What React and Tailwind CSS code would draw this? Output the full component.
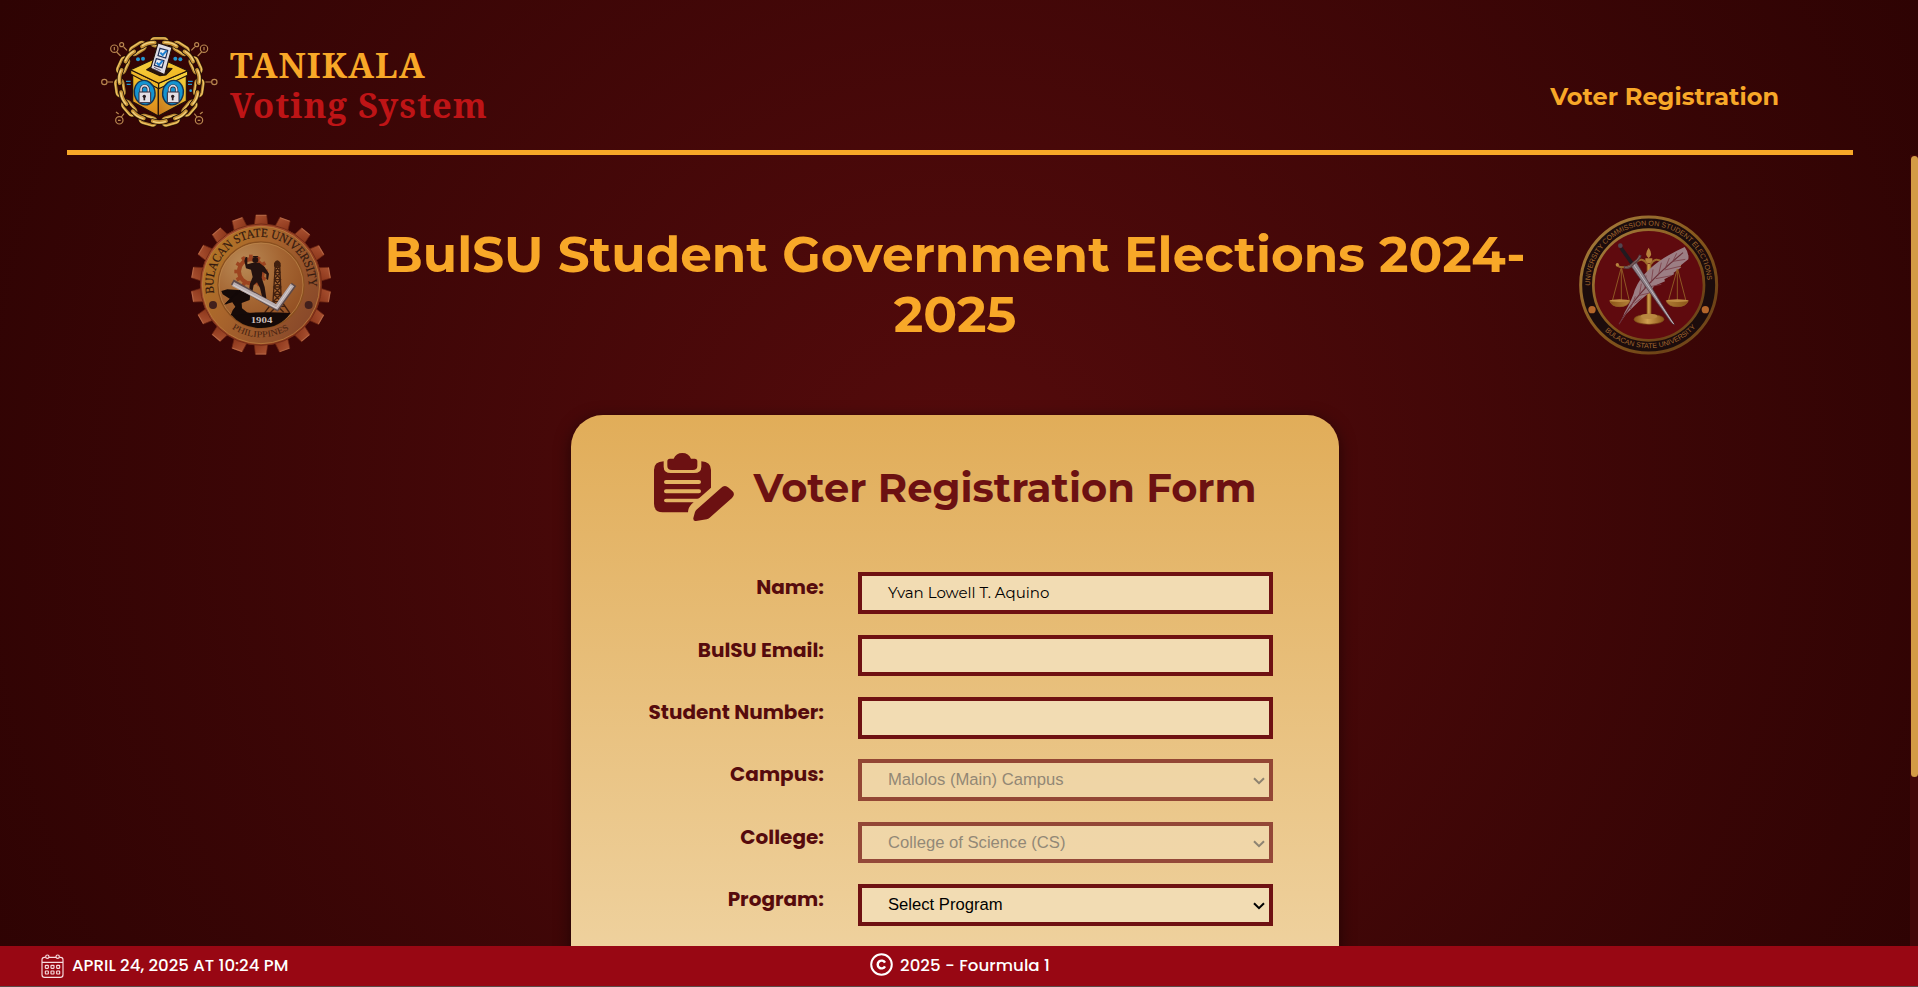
import React from "react";

const range = (n) => Array.from({ length: n }, (_, i) => i);

function TanikalaLogo() {
  const links = range(11);
  return (
    <svg className="h-[100px] w-[125px] shrink-0" viewBox="0 0 375 300" fill="none">
      <defs>
        <linearGradient id="boxTop" x1="0" y1="0" x2="1" y2="1">
          <stop offset="0" stopColor="#f6d443" />
          <stop offset="1" stopColor="#f0b01c" />
        </linearGradient>
        <linearGradient id="boxLeft" x1="0" y1="0" x2="0" y2="1">
          <stop offset="0" stopColor="#f5c52c" />
          <stop offset="1" stopColor="#d9861b" />
        </linearGradient>
        <linearGradient id="boxRight" x1="1" y1="0" x2="0" y2="1">
          <stop offset="0" stopColor="#f7d53c" />
          <stop offset="1" stopColor="#c8751a" />
        </linearGradient>
      </defs>

      <g stroke="#b8864f" strokeWidth="3.5">
        <circle cx="19" cy="156" r="8" />
        <path d="M28 156H45M322 156H340" />
        <circle cx="349" cy="156" r="8" />
        <circle cx="49" cy="56" r="11" />
        <path d="M49 51v10M56 66l12 12M77 51l10 10" />
        <circle cx="71" cy="44" r="6" />
        <circle cx="318" cy="56" r="11" />
        <path d="M318 51v10M311 66l-12 12M290 51l-10 10" />
        <circle cx="296" cy="44" r="6" />
        <circle cx="64" cy="271" r="11" />
        <path d="M60 271h8M70 261l8-10M54 246l8 6" />
        <circle cx="303" cy="271" r="11" />
        <path d="M299 271h8M297 261l-8-10M314 246l-8 6" />
      </g>

      {links.map((i) => (
        <g key={i} transform={`translate(184 156) rotate(${(i * 360) / 11})`}>
          <rect x="-25" y="-131" width="50" height="23" rx="11" stroke="#1c0d08" strokeWidth="12" />
          <rect x="-25" y="-131" width="50" height="23" rx="11" stroke="#b9822f" strokeWidth="8.5" />
          <rect x="-25" y="-132" width="50" height="23" rx="11" stroke="#ecc767" strokeWidth="3.5" />
        </g>
      ))}
      {links.map((i) => (
        <g key={i} transform={`translate(184 156) rotate(${((i + 0.5) * 360) / 11})`}>
          <path d="M-20 -117Q0 -124 20 -117" stroke="#1c0d08" strokeWidth="16" strokeLinecap="round" />
          <path d="M-20 -117Q0 -124 20 -117" stroke="#c99438" strokeWidth="11" strokeLinecap="round" />
          <path d="M-18 -119Q0 -125 18 -119" stroke="#f0d282" strokeWidth="4" strokeLinecap="round" />
        </g>
      ))}

      <g fill="#2496cf">
        <circle cx="120" cy="88" r="6" />
        <circle cx="135" cy="86" r="6" />
        <circle cx="232" cy="86" r="6" />
        <circle cx="247" cy="88" r="6" />
        <circle cx="278" cy="182" r="4" />
        <path d="M84 152h14v4H84zM86 161h12v4H86zM270 152h14v4h-14zM270 161h12v4h-12z" />
      </g>

      <g stroke="#23120a" strokeWidth="3.5" strokeLinejoin="round">
        <path d="M104 130L181 172V258L104 215Z" fill="url(#boxLeft)" />
        <path d="M181 172L265 134V213L181 258Z" fill="url(#boxRight)" />
        <path d="M98 119L182 160V176L98 132Z" fill="#eeb629" />
        <path d="M182 160L269 122V136L182 176Z" fill="#f6cf3a" />
        <path d="M98 119L180 82L269 122L182 160Z" fill="url(#boxTop)" />
        <path d="M146 119L160 110L222 116L203 135L186 137Z" fill="#2a1509" />
        <path d="M180 39L222 52L200 134L158 115Z" fill="#dfdce4" />
      </g>
      <path d="M168 112l20 9M166 117l18 8" stroke="#54485a" strokeWidth="2.5" />
      <g fill="#e6eaf0" stroke="#1d2d55" strokeWidth="3.5">
        <path d="M186 55L209 61L203 84L180 77Z" />
        <path d="M175 86L198 92L192 113L169 106Z" />
      </g>
      <g stroke="#1f7fd0" strokeWidth="6">
        <path d="M187 68l7 7l12-13M176 98l7 7l11-13" />
      </g>

      {[140, 225].map((x) => (
        <g key={x}>
          <ellipse cx={x} cy="188" rx="31" ry="37" fill="#1593cf" stroke="#143250" strokeWidth="4" transform={`rotate(${x < 180 ? -12 : 12} ${x} 188)`} />
          <path d={`M${x - 11} 188v-9a11 12 0 0 1 22 0v9`} stroke="#33283a" strokeWidth="9" />
          <path d={`M${x - 11} 188v-9a11 12 0 0 1 22 0v9`} stroke="#dcd8df" strokeWidth="5" />
          <rect x={x - 17} y="186" width="35" height="32" rx="2" fill="#e3dfe4" stroke="#33283a" strokeWidth="3" />
          <path d={`M${x - 1} 198v13`} stroke="#2a1d20" strokeWidth="5" />
          <circle cx={x - 1} cy="199" r="5" fill="#2a1d20" />
        </g>
      ))}
    </svg>
  );
}

function UniversitySeal() {
  return (
    <svg className="h-[160px] w-[160px] shrink-0" viewBox="0 0 480 480" fill="none">
      <defs>
        <linearGradient id="gear" x1="0" y1="0" x2="1" y2="1">
          <stop offset="0" stopColor="#ab5332" />
          <stop offset="1" stopColor="#873218" />
        </linearGradient>
        <linearGradient id="bronzeRing" x1="0" y1="0" x2="1" y2="0.6">
          <stop offset="0" stopColor="#b67c22" />
          <stop offset="0.45" stopColor="#a9652c" />
          <stop offset="1" stopColor="#8a4a2a" />
        </linearGradient>
        <radialGradient id="bronzeDisc" cx="0.3" cy="0.25" r="0.9">
          <stop offset="0" stopColor="#b98a56" />
          <stop offset="0.5" stopColor="#a46532" />
          <stop offset="1" stopColor="#8f4b1f" />
        </radialGradient>
        <path id="sealTop" d="M102.400 265 A143 143 0 1 1 383.600 265" />
        <path id="sealBottom" d="M142 360 A157 157 0 0 0 344 360" />
      </defs>
      {range(18).map((i) => (
        <g key={i} transform={`rotate(${i * 20} 243 239)`}>
          <path d="M227 30h33l4 36h-42z" fill="url(#gear)" stroke="#6a2412" strokeWidth="2" />
          <path d="M228 31h31" stroke="#b96a48" strokeWidth="3" />
        </g>
      ))}
      <circle cx="243" cy="239" r="182" fill="url(#gear)" stroke="#742c16" strokeWidth="3" />
      <circle cx="243" cy="240" r="176" fill="url(#bronzeRing)" stroke="#b97d3d" strokeWidth="2.500" />
      <circle cx="243" cy="240" r="129" fill="url(#bronzeDisc)" stroke="#8a501f" strokeWidth="4" />
      <circle cx="243" cy="240" r="126" stroke="#c08a4d" strokeWidth="2" />

      <g fill="#33190f" fontFamily="'Liberation Serif', serif">
        <text fontSize="37" stroke="#33190f" strokeWidth="0.6"><textPath href="#sealTop" textLength="482" lengthAdjust="spacingAndGlyphs">BULACAN STATE UNIVERSITY</textPath></text>
        <text fontSize="27" fill="#4a2412"><textPath href="#sealBottom" startOffset="17" textLength="182" lengthAdjust="spacingAndGlyphs">PHILIPPINES</textPath></text>
      </g>
      <circle cx="99" cy="300" r="12" fill="#42201c" />
      <circle cx="386" cy="300" r="12" fill="#42201c" />

      <circle cx="213" cy="199" r="36" stroke="#9c4420" strokeWidth="12" />
      {range(12).map((i) => (
        <rect key={i} x="207" y="149" width="11" height="12" fill="#9c4420" transform={`rotate(${i * 30} 213 199)`} />
      ))}

      <g fill="#24120f">
        <circle cx="226" cy="165" r="9" />
        <path d="M217 157h18l-2-4h-13z" />
        <path d="M216 174L238 173L254 186L267 206L264 225L259 222L259 208L247 200L245 218L254 246L259 279L250 285L246 274L240 249L231 232L221 240L217 261L207 262L210 236L218 216L213 194L198 190L193 168L197 155L202 157L202 178Z" />
      </g>

      <g stroke="#42200f" strokeWidth="4">
        <path d="M286 180L279 290L254 323M299 180L304 288L329 324M286 180h14M284 202h17M282 224h20M281 246h22M280 268h23M279 290h25M272 304h42M286 180l15 22l-18 22l20 22l-22 22l24 22M300 180l-16 22l18 22l-21 22l22 22l-24 22l32 32M304 290l-34 34" />
        <path d="M284 175q8-14 16 0v8h-16z" fill="#42200f" />
      </g>

      <path d="M152 328Q240 318 332 324Q300 369 243 369T152 328Z" fill="#140907" />
      <path d="M124 258L142 253L174 255L195 262L211 267L209 285L185 294L186 310L201 322L225 328L152 331L158 316L166 305L157 292L132 299L150 282L128 268Z" fill="#150a08" />
      <path d="M137 297L172 263L187 250" stroke="#130908" strokeWidth="5" />

      <path d="M157 231L291 309L342 238" stroke="#5e4a49" strokeWidth="17" />
      <path d="M159 237L290 306L337 240" stroke="#b9aeb0" strokeWidth="13" strokeLinejoin="miter" />
      <path d="M160 240L289 309L334 243" stroke="#d8d0d0" strokeWidth="3" />
      <text x="212" y="354" fill="#c8bcb8" fontFamily="'Liberation Serif', serif" fontSize="27" fontWeight="700" textLength="65" lengthAdjust="spacingAndGlyphs">1904</text>
    </svg>
  );
}

function CommissionSeal() {
  return (
    <svg className="h-[160px] w-[160px] shrink-0" viewBox="0 0 480 480" fill="none">
      <defs>
        <linearGradient id="goldRing" x1="0" y1="0" x2="1" y2="1">
          <stop offset="0" stopColor="#a9803f" />
          <stop offset="0.5" stopColor="#86581c" />
          <stop offset="0.8" stopColor="#6d4216" />
          <stop offset="1" stopColor="#7e5420" />
        </linearGradient>
        <linearGradient id="gold" x1="0" y1="0" x2="1" y2="0">
          <stop offset="0" stopColor="#8b5517" />
          <stop offset="0.45" stopColor="#cf9f50" />
          <stop offset="1" stopColor="#8b5517" />
        </linearGradient>
        <path id="commTop" d="M75 246 A176.200 176.200 0 1 1 427 246" />
        <path id="commBottom" d="M117 375 A191 191 0 0 0 396 362" />
      </defs>
      <circle cx="251" cy="240" r="204" fill="#1c0c0c" stroke="url(#goldRing)" strokeWidth="9" />
      <circle cx="251" cy="240" r="166" fill="#5f0a0e" stroke="url(#goldRing)" strokeWidth="8" />
      <g fill="#a2672f" fontFamily="'Liberation Sans', sans-serif">
        <text fontSize="21"><textPath href="#commTop" startOffset="4" textLength="546" lengthAdjust="spacingAndGlyphs">UNIVERSITY COMMISSION ON STUDENT ELECTIONS</textPath></text>
        <text fontSize="21"><textPath href="#commBottom" startOffset="3" textLength="304" lengthAdjust="spacingAndGlyphs">BULACAN STATE UNIVERSITY</textPath></text>
      </g>
      <circle cx="81" cy="314" r="11" fill="#b4662a" />
      <circle cx="421" cy="314" r="11" fill="#b4662a" />

      <path d="M245 176h14v160h-14z" fill="url(#gold)" />
      <path d="M251 128q15 22 0 32q-15-10 0-32M241 160h21v14h-21z" fill="#b5813c" />
      <path d="M247 178Q232 153 210 174Q180 196 155 181M257 178Q272 153 294 174Q318 196 344 181" stroke="#9c6a2b" strokeWidth="6" />
      <circle cx="157" cy="179" r="5" fill="#b88440" />
      <circle cx="343" cy="181" r="5" fill="#b88440" />
      <ellipse cx="252" cy="343" rx="45" ry="15" fill="url(#gold)" stroke="#7c4b16" strokeWidth="2" />
      <ellipse cx="252" cy="334" rx="25" ry="8" fill="#b98840" />

      <path d="M162 358Q175 335 178 324Q205 276 209 255Q225 218 253 193Q290 157 359 126Q373 144 370 163L342 185L349 187L325 204L328 207L298 223L300 229L266 244L262 255L223 288L184 326Z" fill="#9c7e84" />
      <path d="M162 358Q190 308 224 268Q275 207 354 143" stroke="#6b3039" strokeWidth="3.500" />
      <path d="M223 271l6-35M239 253l4-42M259 232l5-39M280 211l9-38M300 192l13-33M322 172l13-27M224 271l34-8M246 247l43-9M272 221l47-9M299 195l46-11M324 169l37-6M208 295l22-16M196 312l15-38" stroke="#7b4048" strokeWidth="2.500" />

      <g stroke="#986628" strokeWidth="2.500">
        <path d="M168 190L142 288M170 190L193 288M169 190v98M337 192L310 288M338 192L363 288M337 192v96" />
      </g>
      <path d="M134 287h61q-6 18-31 18t-30-18zM303 287h67q-6 18-33 18t-34-18z" fill="url(#gold)" stroke="#99682a" strokeWidth="2" />
      <ellipse cx="164" cy="287" rx="30" ry="4" fill="#bf8d43" />
      <ellipse cx="337" cy="287" rx="33" ry="4" fill="#bf8d43" />

      <path d="M195 179L211 167L329 360L318 352Z" fill="#8d8289" stroke="#4a2b32" strokeWidth="2" />
      <path d="M203 174L326 357" stroke="#c1bac0" strokeWidth="3" />
      <path d="M168 129L201 175" stroke="#211a20" strokeWidth="11" />
      <circle cx="166" cy="122" r="7" fill="#514650" />
      <path d="M177 186Q193 192 204 176Q221 167 226 150" stroke="#5a4144" strokeWidth="8" />
      <path d="M180 187Q196 188 205 174Q219 165 225 153" stroke="#9a7a74" strokeWidth="2" />
    </svg>
  );
}

function ClipboardPencilIcon() {
  return (
    <svg className="h-[90px] w-[110px] shrink-0" viewBox="0 0 330 270" fill="#6c1112">
      <path d="M71 64Q42 65 42 90V191Q42 217 68 217H144Q144 200 161 187H78Q72 187 72 181.500T78 176H171.500Q175 176 178 174L213 143V90Q213 66 184 64V80Q184 99 162 99H93Q71 99 71 80Z" />
      <path d="M82 64Q82 56 90 56H101Q108 39 127 39T153 56H164Q172 56 172 64V78Q172 90 158 90H96Q82 90 82 78Z" />
      <path d="M78 126H177M78 153.500H177" stroke="#e3b462" strokeWidth="12" strokeLinecap="round" />
      <path d="M171 208L243 144Q254 133 266 143L277 153Q287 163 276 174L209 233Q205 237 200 238L168 243Q159 244 160 234L165 216Q167 211 171 208Z" />
    </svg>
  );
}

function CalendarIcon() {
  return (
    <svg className="h-[25px] w-[23px] shrink-0" viewBox="0 0 69 75" fill="none" stroke="#f7dcdf" strokeWidth="3.500">
      <path d="M14 10H10Q3 10 3 17V62Q3 70 11 70H58Q66 70 66 62V17Q66 10 59 10H55M24 10H45M3 25H66" />
      <circle cx="19" cy="8" r="5" />
      <circle cx="50" cy="8" r="5" />
      {[13, 30, 47].map((x) => [34, 51].map((y) => <rect key={`${x}-${y}`} x={x} y={y} width="9" height="9" rx="1.500" />))}
    </svg>
  );
}

function Field({ label, children }) {
  return (
    <div className="mb-[20.800px] flex h-[41.600px] items-start">
      <label className="w-[253px] text-right font-['Poppins',sans-serif] text-[20px] leading-[30px] font-bold text-[#560b0d]">{label}</label>
      <div className="ml-[34px] h-full w-[415px]">{children}</div>
    </div>
  );
}

function TextBox({ children }) {
  return (
    <div className="flex h-full w-full items-center border-4 border-[#6f1112] bg-[#f2dcb3] pl-[26px] font-['Montserrat',sans-serif] text-[15px] text-black">
      {children}
    </div>
  );
}

function SelectBox({ disabled, children }) {
  return (
    <div className={`flex h-full w-full items-center justify-between border-4 border-[#6f1112] bg-[#f2dcb3] pr-[4px] pl-[26px] font-['Liberation_Sans',sans-serif] text-[16.640px] text-black ${disabled ? "opacity-70" : ""}`}>
      <span className={`pt-[1px] ${disabled ? "text-[#6d6d6d]" : ""}`}>{children}</span>
      <svg className="mt-[2px] h-[8px] w-[12px]" viewBox="0 0 12 8" fill="none" stroke={disabled ? "#666666" : "#000000"} strokeWidth="2">
        <path d="M1 1.200L6 6.200L11 1.200" />
      </svg>
    </div>
  );
}

export default function App() {
  return (
    <div className="flex h-[987px] w-[1918px] flex-col overflow-hidden bg-[radial-gradient(circle_at_center,#550b0c,#2e0303)]">
      <header className="mx-[67px] flex h-[155px] w-[1786px] shrink-0 justify-between border-b-[5px] border-[#f8a828]">
        <div className="flex pt-[30px] pl-[31px]">
          <TanikalaLogo />
          <div className="ml-[7px] pt-[15px] font-['Noto_Serif',serif] text-[34.500px] leading-[40px] font-bold tracking-[1.050px]">
            <div className="text-[#f8a828]">TANIKALA</div>
            <div className="text-[#be1416]">Voting System</div>
          </div>
        </div>
        <nav className="pt-[82px] pr-[74px] font-['Montserrat',sans-serif] text-[24px] leading-[29px] font-bold text-[#f8a828]">Voter Registration</nav>
      </header>

      <div className="flex min-h-0 flex-1">
        <main className="flex w-[1910px] flex-col items-center overflow-hidden">
          <div className="mt-[50px] flex h-[160px] w-[1550px] shrink-0 items-start">
            <UniversitySeal />
            <h1 className="mr-[20px] ml-[25px] w-[1180px] pt-[20px] text-center font-['Montserrat',sans-serif] text-[50px] leading-[60px] font-bold text-[#f8a828]">
              BulSU Student Government Elections 2024-2025
            </h1>
            <CommissionSeal />
          </div>

          <section className="mt-[50px] h-[760px] w-[768px] shrink-0 rounded-[32px] bg-[linear-gradient(180deg,#e1ad59,#f4e0ba)] pt-[25px] shadow-[0_4px_16px_rgba(0,0,0,0.5)]">
            <div className="flex pl-[69px]">
              <ClipboardPencilIcon />
              <h2 className="ml-[3.500px] pt-[23px] font-['Montserrat',sans-serif] text-[40px] leading-[49px] font-bold text-[#6c1112]">Voter Registration Form</h2>
            </div>
            <div className="pt-[42.300px]">
              <Field label="Name:"><TextBox>Yvan Lowell T. Aquino</TextBox></Field>
              <Field label="BulSU Email:"><TextBox /></Field>
              <Field label="Student Number:"><TextBox /></Field>
              <Field label="Campus:"><SelectBox disabled>Malolos (Main) Campus</SelectBox></Field>
              <Field label="College:"><SelectBox disabled>College of Science (CS)</SelectBox></Field>
              <Field label="Program:"><SelectBox>Select Program</SelectBox></Field>
            </div>
          </section>
        </main>
        <div className="w-[8px] bg-[#430708] pt-px pl-px">
          <div className="h-[621px] w-[7px] rounded-[4px] bg-[#d39b45]" />
        </div>
      </div>

      <footer className="flex h-[41px] shrink-0 border-b border-[#5c4a48] bg-[#980713] font-['Poppins',sans-serif] text-[16.640px] leading-[40px] font-medium text-white">
        <div className="flex w-[870px] items-start pl-[41px]">
          <div className="pt-[8px]"><CalendarIcon /></div>
          <span className="ml-[8px]">APRIL 24, 2025 AT 10:24 PM</span>
        </div>
        <div className="flex items-start">
          <svg className="mt-[7px] h-[23px] w-[23px]" viewBox="0 0 23 23" fill="none" stroke="#ffffff">
            <circle cx="11.500" cy="11.500" r="10.300" strokeWidth="2" />
            <path d="M15 9.600A3.900 3.900 0 1 0 15 13.400" strokeWidth="2.400" />
          </svg>
          <span className="ml-[7px] tracking-[0.050px]">2025 - Fourmula 1</span>
        </div>
      </footer>
    </div>
  );
}
